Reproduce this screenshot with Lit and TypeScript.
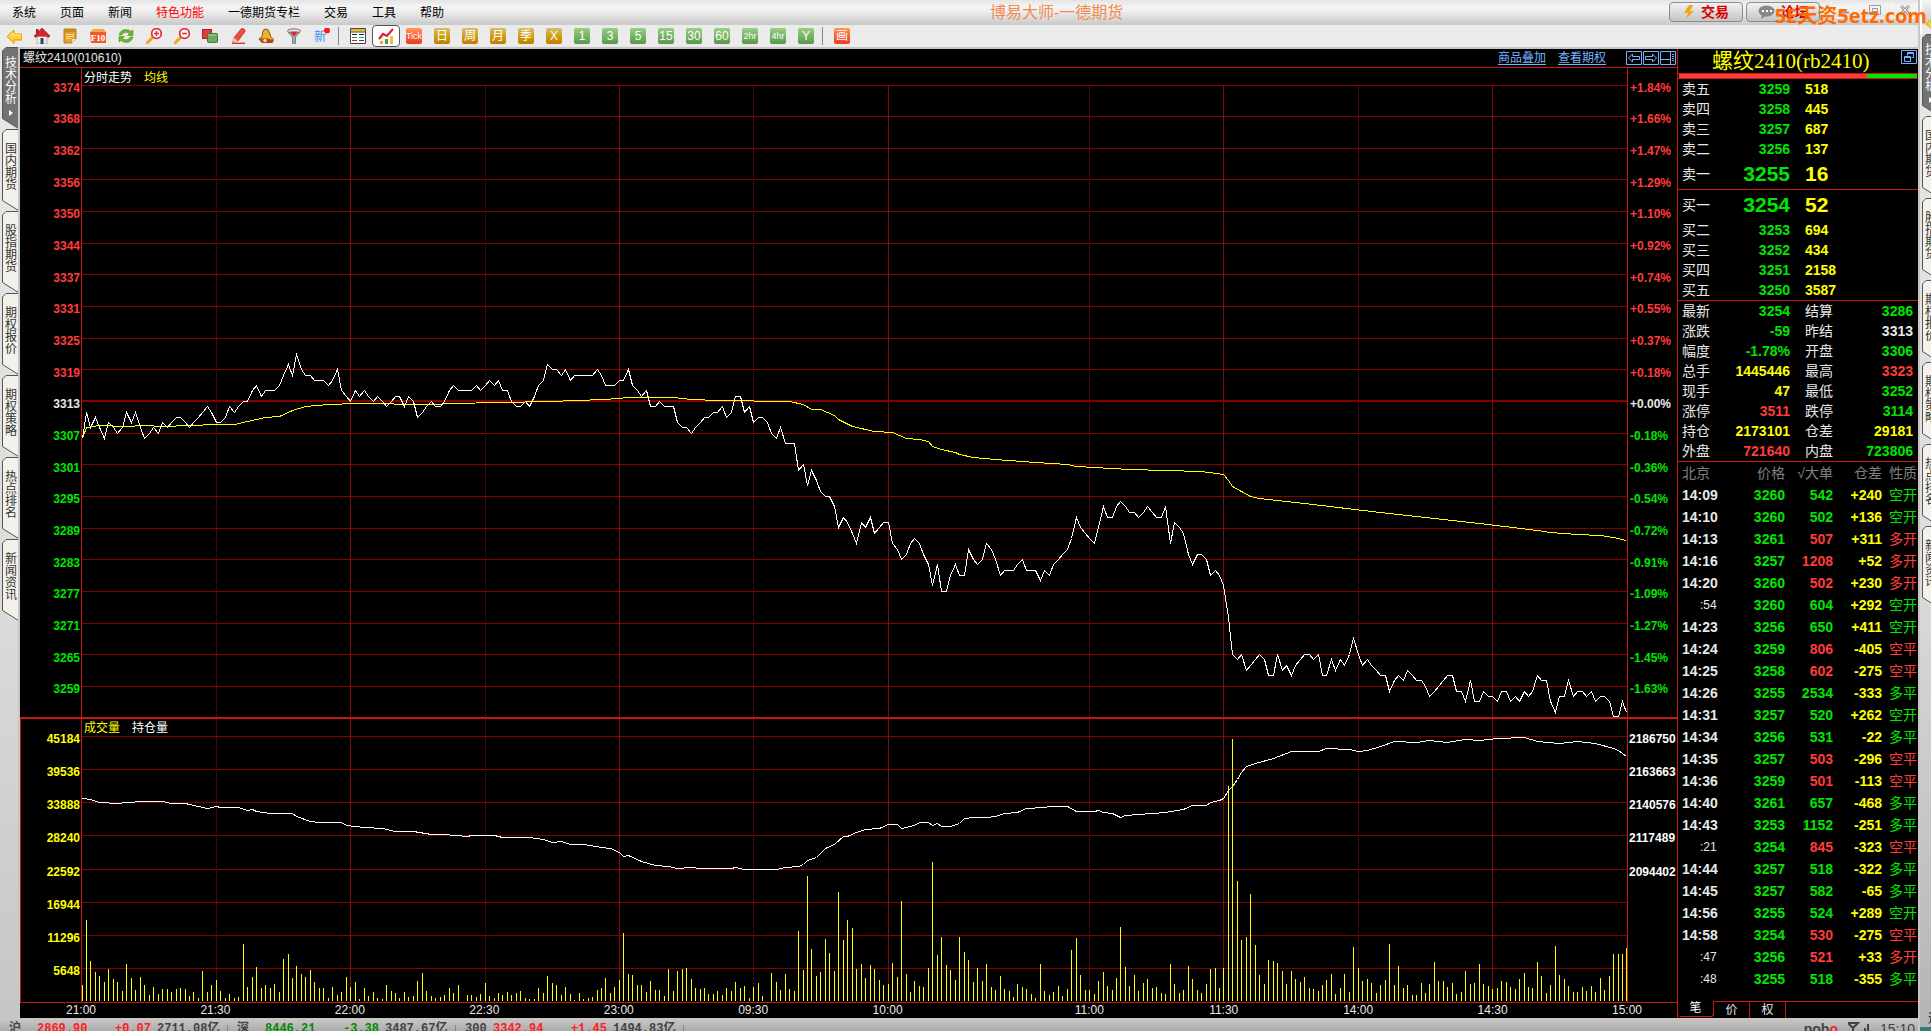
import { LitElement, html, svg, css } from "lit";
import { customElement } from "lit/decorators.js";
import { classMap } from "lit/directives/class-map.js";

const base = css`
  *, *::before, *::after { box-sizing: border-box; }
  button { font: inherit; color: inherit; background: none; border: 0; padding: 0; margin: 0; cursor: pointer; white-space: nowrap; }
  svg { display: block; }
  table { border-collapse: separate; border-spacing: 0; }
  td, th { padding: 0; font-weight: inherit; }
  .red { color: #ff3c3c; }
  .green { color: #00e600; }
  .yellow { color: #ffff00; }
  .white { color: #e8e8e8; }
`;

/* ---------- market data ---------- */

const SESSION = 345;
const MARKS: [number, string, boolean][] = [
  [0, "21:00", false], [30, "21:30", true], [60, "22:00", false], [90, "22:30", true], [120, "23:00", false],
  [150, "09:30", true], [180, "10:00", false], [225, "11:00", true], [255, "11:30", false],
  [285, "14:00", true], [315, "14:30", false], [345, "15:00", false],
];

const LAST = [
  3306,3311,3308,3310,3308,3306,3309,3308,3307,3308,3311,3309,3311,3308,3306,3307,3308,3307,3309,3308,
  3309,3310,3310,3309,3308,3309,3310,3311,3312,3311,3309,3309,3310,3312,3311,3312,3313,3313,3315,3316,
  3314,3315,3315,3315,3316,3318,3320,3318,3322,3319,3318,3318,3317,3317,3317,3316,3317,3319,3315,3314,
  3313,3315,3314,3315,3314,3313,3314,3313,3312,3313,3314,3314,3312,3314,3313,3310,3311,3312,3313,3312,
  3312,3313,3315,3316,3315,3315,3315,3315,3316,3315,3316,3317,3316,3317,3315,3315,3313,3312,3312,3313,
  3312,3314,3316,3317,3320,3319,3319,3318,3319,3317,3318,3318,3318,3318,3318,3319,3318,3316,3316,3316,
  3317,3317,3319,3316,3315,3314,3315,3312,3312,3313,3312,3312,3312,3309,3308,3308,3307,3308,3309,3310,
  3310,3311,3311,3312,3310,3311,3314,3314,3311,3312,3309,3310,3310,3309,3307,3306,3308,3305,3305,3305,
  3300,3301,3297,3300,3298,3296,3295,3295,3293,3289,3291,3290,3288,3286,3290,3289,3291,3288,3289,3290,
  3290,3286,3285,3283,3284,3286,3287,3286,3284,3282,3278,3282,3277,3277,3280,3282,3280,3280,3285,3283,
  3282,3283,3286,3285,3283,3280,3281,3281,3281,3282,3283,3281,3281,3281,3279,3281,3280,3282,3283,3284,
  3285,3287,3291,3289,3288,3287,3286,3289,3293,3291,3291,3293,3294,3293,3292,3292,3291,3292,3293,3292,
  3291,3291,3293,3286,3290,3289,3288,3284,3282,3284,3284,3283,3280,3281,3280,3278,3272,3265,3264,3265,
  3262,3263,3264,3265,3264,3261,3261,3265,3262,3263,3261,3263,3264,3265,3265,3264,3265,3261,3261,3264,
  3262,3264,3263,3265,3268,3265,3263,3264,3263,3262,3261,3261,3258,3260,3261,3260,3262,3261,3260,3260,
  3259,3257,3258,3259,3260,3261,3261,3258,3258,3256,3260,3256,3256,3258,3257,3257,3256,3258,3258,3256,
  3257,3256,3258,3257,3258,3261,3260,3260,3256,3254,3257,3257,3260,3257,3258,3258,3257,3258,3256,3257,
  3257,3256,3253,3253,3256,3254,
];

/* [minute, vertical position] */
const AVERAGE: [number, number][] = [
  [0,370],[1,359],[4,357],[10,358],[14,357],[18,358],[24,357],[30,356],[34,356],[37,353],[41,349],[44,348],[47,342],
  [50,338],[55,336],[61,335],[78,336],[83,335],[93,334],[105,333],[110,332],[117,331],[122,329],[132,329],[136,331],
  [142,332],[158,333],[161,336],[163,341],[165,341],[168,347],[169,351],[172,358],[177,363],[181,364],[184,370],
  [187,371],[189,373],[190,378],[192,381],[195,384],[196,386],[199,389],[204,391],[213,394],[220,396],[222,398],
  [226,399],[234,401],[242,402],[250,403],[255,406],[256,412],[257,418],[259,423],[261,428],[263,430],[273,435],
  [290,444],[312,455],[325,462],[328,464],[334,466],[339,467],[342,469],[345,472],
];

const OPEN_INTEREST: [number, number][] = [
  [0,79],[2,80],[4,83],[8,84],[10,83],[14,82],[18,82],[20,84],[23,84],[24,85],[26,87],[28,89],[30,87],[31,88],[35,88],
  [37,91],[38,90],[39,92],[42,94],[47,94],[48,97],[51,102],[53,103],[58,103],[59,106],[63,108],[67,109],[70,112],[74,112],
  [78,115],[81,115],[86,117],[87,116],[92,116],[94,118],[100,118],[103,120],[105,123],[107,122],[109,125],[112,125],
  [116,128],[118,129],[120,133],[121,137],[122,136],[125,142],[128,146],[131,147],[133,149],[136,148],[138,149],[145,149],
  [146,148],[148,150],[155,150],[157,148],[160,147],[161,145],[162,141],[164,138],[165,134],[166,129],[168,125],[170,117],
  [171,117],[173,113],[175,110],[178,109],[180,105],[182,105],[183,109],[186,106],[187,103],[189,103],[190,106],[191,104],
  [192,107],[194,107],[196,104],[197,99],[199,98],[202,98],[204,97],[206,94],[209,93],[211,89],[215,88],[216,87],[220,87],
  [222,92],[226,92],[227,91],[228,93],[230,94],[232,98],[233,96],[236,95],[239,94],[242,93],[246,90],[248,86],[251,86],
  [252,83],[254,81],[255,79],[256,71],[257,67],[258,60],[259,53],[260,47],[262,44],[266,39],[270,32],[276,32],[278,29],
  [283,30],[285,32],[287,31],[290,27],[293,22],[298,23],[301,21],[305,23],[309,20],[312,21],[316,19],[322,18],[325,22],
  [330,24],[334,22],[338,24],[342,29],[343,31],[345,37],
];

const VOLUME = [
  16,81,40,29,25,19,32,22,19,10,37,23,11,24,16,6,14,7,12,12,9,12,13,12,5,9,3,30,9,16,
  21,10,3,7,3,4,57,14,24,34,13,16,13,17,9,42,47,23,35,27,24,31,19,13,13,3,14,6,9,24,
  14,19,2,13,5,9,3,2,16,10,8,3,9,4,5,20,28,10,5,3,4,6,13,8,16,0,6,6,4,7,
  18,5,3,8,6,9,6,8,10,3,2,2,13,8,25,18,16,6,14,7,1,8,2,3,4,11,13,23,8,14,
  21,68,27,26,16,16,9,20,11,11,5,32,10,30,32,33,22,13,12,13,7,7,10,6,13,10,19,13,15,3,
  14,18,5,0,28,19,11,27,12,10,70,31,125,52,25,29,62,48,30,109,61,81,73,32,37,23,36,32,21,16,
  17,38,24,100,27,9,20,15,14,33,139,46,64,36,31,21,64,49,41,19,33,20,37,14,11,25,12,10,4,17,
  14,12,7,3,37,10,6,9,15,5,12,51,63,26,11,11,7,20,29,15,11,23,74,34,15,26,10,18,22,13,
  14,8,7,37,17,8,11,35,22,11,8,17,32,33,13,33,215,262,120,61,64,107,56,26,17,41,40,38,30,17,
  30,22,19,24,13,12,10,16,21,27,7,13,27,9,54,33,20,22,18,8,16,21,57,16,35,13,16,6,6,18,
  8,17,39,20,20,14,18,7,9,30,17,18,37,17,15,12,13,20,19,14,12,22,28,14,13,39,25,8,16,55,
  26,22,15,9,9,14,10,15,9,23,11,25,47,47,47,53,
];

const PRICE_GRID = [17,48,80,111,143,175,206,238,270,301,333,365,396,428,460,491,523,555,586,618];
const VOLUME_GRID = [17,50,83,116,150,183,216,249];
const PRICE_LABELS = [3374,3368,3362,3356,3350,3344,3337,3331,3325,3319,3313,3307,3301,3295,3289,3283,3277,3271,3265,3259];
const CHANGE_LABELS = ["+1.84%","+1.66%","+1.47%","+1.29%","+1.10%","+0.92%","+0.74%","+0.55%","+0.37%","+0.18%","+0.00%",
  "-0.18%","-0.36%","-0.54%","-0.72%","-0.91%","-1.09%","-1.27%","-1.45%","-1.63%"];
const VOLUME_LABELS = [45184,39536,33888,28240,22592,16944,11296,5648];
const OI_LABELS = ["2186750","2163663","2140576","2117489","2094402","","",""];

const PLOT_W = 1545;
const PRICE_H = 649;
const VOL_H = 283;
const mx = (m: number) => Math.min(PLOT_W - 1, Math.floor((m * PLOT_W) / SESSION));
const priceY = (p: number) => Math.min(PRICE_H - 1, Math.round(333 + (3313 - p) * 5.27));
const line = (pts: [number, number][]) => pts.map(([m, y]) => `${mx(m) + 0.5},${y + 0.5}`).join(" ");

/* ---------- side tabs ---------- */

@customElement("side-tabs")
class SideTabs extends LitElement {
  static styles = [base, css`
    :host { display: block; }
    .tabs { display: flex; flex-direction: column; padding-left: 2px; }
    .tab { display: grid; width: 17px; height: 82px; color: #333; }
    .tab > * { grid-area: 1 / 1; }
    .word { display: flex; flex-direction: column; align-items: center; padding: 10px 0 0 1px; width: 17px;
      font-size: 12px; line-height: 12px; }
    .word.plain { padding-top: 14px; }
    .arrow { width: 0; height: 0; margin-top: 5px; border-left: 4px solid #fff; border-top: 3px solid transparent; border-bottom: 3px solid transparent; }
    .tab.on { color: #fff; }
  `];
  names = ["技术分析", "国内期货", "股指期货", "期权报价", "期权策略", "热点排名", "新闻资讯"];
  render() {
    return html`<nav class="tabs">${this.names.map((n, i) => html`
      <button class=${classMap({ tab: true, on: i === 0 })}>
        <svg width="17" height="82" viewBox="0 0 17 82">
          <path d="M16.5 .5H4L.5 4V71.5L16.5 81.5" fill=${i === 0 ? "#737373" : "#f2f1ea"} stroke="#555"/>
        </svg>
        <span class=${classMap({ word: true, plain: i > 0 })}>
          ${[...n].map((c) => html`<span>${c}</span>`)}
          ${i === 0 ? html`<i class="arrow"></i>` : null}
        </span>
      </button>`)}</nav>`;
  }
}

/* ---------- intraday chart ---------- */

@customElement("time-chart")
class TimeChart extends LitElement {
  static styles = [base, css`
    :host { display: flex; flex-direction: column; flex: 1; min-width: 0; min-height: 0; background: #000; color: #e8e8e8; font-size: 12px; line-height: 16px; }
    .head { display: flex; align-items: center; height: 19px; padding-left: 3px; border-bottom: 1px solid #c81810; }
    .head h2 { flex: 1; margin: 0; font-size: 12px; font-weight: 400; }
    .head a { color: #74b4ff; margin-right: 12px; text-decoration: underline; text-underline-offset: 2px; }
    .tools { display: flex; gap: 1px; margin-left: 8px; padding-right: 1px; }
    .pane { display: flex; min-height: 0; }
    .price { flex: 649; }
    .volume { flex: 284; border-top: 2px solid #c81810; }
    .left, .right { display: flex; flex-direction: column; font-weight: 700; }
    .left { width: 61px; padding-right: 1px; text-align: right; }
    .right { width: 49px; padding-left: 2px; white-space: nowrap; }
    .price .left, .price .right { padding-top: 4px; padding-bottom: 12px; }
    .volume .left { border-left: 1px solid #c81810; }
    .volume .left, .volume .right { padding-top: 3px; padding-bottom: 14px; border-bottom: 1px solid #c81810; }
    .volume .right { padding-left: 1px; color: #fff; }
    .volume .plot { border-bottom: 1px solid #c81810; }
    .scale { flex: 1; min-height: 0; display: flex; flex-direction: column; justify-content: center; }
    .plot { position: relative; flex: 1; min-width: 0; display: flex; border-left: 1px solid #c81810; border-right: 1px solid #c81810; }
    .plot svg { flex: 1; min-width: 0; width: 100%; height: 100%; }
    .legend { position: absolute; left: 2px; top: 2px; display: flex; gap: 12px; color: #fff; }
    .volume .legend { top: 1px; }
    .axis { display: flex; height: 15px; line-height: 15px; padding: 0 50px 0 61px; }
    .slot { min-width: 0; }
    .slot span { display: flex; justify-content: center; width: 0; }
  `];

  verticals(top: number, bottom: number) {
    return MARKS.slice(1, -1).map(([m, , dotted]) => svg`
      <line x1=${mx(m) + 0.5} x2=${mx(m) + 0.5} y1=${top} y2=${bottom} stroke="#860808"
        stroke-dasharray=${dotted ? "1 1" : "none"}/>`);
  }

  render() {
    return html`
      <header class="head">
        <h2>螺纹2410(010610)</h2>
        <a href="#overlay">商品叠加</a><a href="#options">查看期权</a>
        <div class="tools">
          <button aria-label="左"><svg width="16" height="14" fill="none" stroke="#74b4ff"><path d="M.5 .5h15v13H.5zM2.5 7l4-4v2.500h7v3h-7V11z"/></svg></button>
          <button aria-label="右"><svg width="16" height="14" fill="none" stroke="#74b4ff"><path d="M.5 .5h15v13H.5zM13.500 7l-4-4v2.500h-7v3h7V11z"/></svg></button>
          <button aria-label="布局"><svg width="16" height="14" fill="none" stroke="#74b4ff"><path d="M.5 .5h15v13H.5zM10.500 1v12M1 8.500h9M12 3.500h2M12 5.500h2M12 7.500h2M12 9.500h2"/></svg></button>
        </div>
      </header>
      <section class="pane price">
        <div class="left">${PRICE_LABELS.map((p, i) => html`<div class="scale ${i < 10 ? "red" : i > 10 ? "green" : "white"}">${p}</div>`)}</div>
        <div class="plot">
          <svg viewBox="0 0 ${PLOT_W} ${PRICE_H}" preserveAspectRatio="none" shape-rendering="crispEdges" fill="none">
            ${PRICE_GRID.map((y, i) => svg`<line x1="0" x2=${PLOT_W} y1=${i === 10 ? y : y + 0.5} y2=${i === 10 ? y : y + 0.5} stroke="#860000" stroke-width=${i === 10 ? 2 : 1}/>`)}
            ${this.verticals(17, PRICE_H)}
            <polyline points=${line(AVERAGE)} stroke="#ffff00"/>
            <polyline points=${line(LAST.map((p, i) => [i, priceY(p)]))} stroke="#fff"/>
          </svg>
          <div class="legend"><span>分时走势</span><span class="yellow">均线</span></div>
        </div>
        <div class="right">${CHANGE_LABELS.map((p, i) => html`<div class="scale ${i < 10 ? "red" : i > 10 ? "green" : "white"}">${p}</div>`)}</div>
      </section>
      <section class="pane volume">
        <div class="left yellow">${VOLUME_LABELS.map((v) => html`<div class="scale">${v}</div>`)}</div>
        <div class="plot">
          <svg viewBox="0 0 ${PLOT_W} ${VOL_H}" preserveAspectRatio="none" shape-rendering="crispEdges" fill="none">
            ${VOLUME_GRID.map((y) => svg`<line x1="0" x2=${PLOT_W} y1=${y + 0.5} y2=${y + 0.5} stroke="#860000"/>`)}
            ${this.verticals(0, VOL_H)}
            <path d=${VOLUME.map((v, i) => v ? `M${mx(i) + 0.5} 282V${282 - v}` : "").join("")} stroke="#ffff00"/>
            <polyline points=${line(OPEN_INTEREST)} stroke="#fff"/>
          </svg>
          <div class="legend"><span class="yellow">成交量</span><span>持仓量</span></div>
        </div>
        <div class="right">${OI_LABELS.map((v) => html`<div class="scale">${v}</div>`)}</div>
      </section>
      <div class="axis">${MARKS.map(([m, t], i) => html`
        <div class="slot" style="flex:${i < MARKS.length - 1 ? MARKS[i + 1][0] - m : 0} 0 0px"><span>${t}</span></div>`)}</div>`;
  }
}

/* ---------- quote panel ---------- */

type Row = [string, string, string];
const ASKS: Row[] = [["卖五", "3259", "518"], ["卖四", "3258", "445"], ["卖三", "3257", "687"], ["卖二", "3256", "137"], ["卖一", "3255", "16"]];
const BIDS: Row[] = [["买一", "3254", "52"], ["买二", "3253", "694"], ["买三", "3252", "434"], ["买四", "3251", "2158"], ["买五", "3250", "3587"]];
const STATS = [
  ["最新", "3254", "green", "结算", "3286", "green"],
  ["涨跌", "-59", "green", "昨结", "3313", "white"],
  ["幅度", "-1.78%", "green", "开盘", "3306", "green"],
  ["总手", "1445446", "yellow", "最高", "3323", "red"],
  ["现手", "47", "yellow", "最低", "3252", "green"],
  ["涨停", "3511", "red", "跌停", "3114", "green"],
  ["持仓", "2173101", "yellow", "仓差", "29181", "yellow"],
  ["外盘", "721640", "red", "内盘", "723806", "green"],
];
const TICKS: [string, string, string, string, string, string][] = [
  ["14:09", "3260", "542", "g", "+240", "空开"], ["14:10", "3260", "502", "g", "+136", "空开"],
  ["14:13", "3261", "507", "r", "+311", "多开"], ["14:16", "3257", "1208", "r", "+52", "多开"],
  ["14:20", "3260", "502", "r", "+230", "多开"], [":54", "3260", "604", "g", "+292", "空开"],
  ["14:23", "3256", "650", "g", "+411", "空开"], ["14:24", "3259", "806", "r", "-405", "空平"],
  ["14:25", "3258", "602", "r", "-275", "空平"], ["14:26", "3255", "2534", "g", "-333", "多平"],
  ["14:31", "3257", "520", "g", "+262", "空开"], ["14:34", "3256", "531", "g", "-22", "多平"],
  ["14:35", "3257", "503", "r", "-296", "空平"], ["14:36", "3259", "501", "r", "-113", "空平"],
  ["14:40", "3261", "657", "g", "-468", "多平"], ["14:43", "3253", "1152", "g", "-251", "多平"],
  [":21", "3254", "845", "r", "-323", "空平"], ["14:44", "3257", "518", "g", "-322", "多平"],
  ["14:45", "3257", "582", "g", "-65", "多平"], ["14:56", "3255", "524", "g", "+289", "空开"],
  ["14:58", "3254", "530", "r", "-275", "空平"], [":47", "3256", "521", "r", "+33", "多开"],
  [":48", "3255", "518", "g", "-355", "多平"],
];

@customElement("quote-panel")
class QuotePanel extends LitElement {
  static styles = [base, css`
    :host { display: flex; flex-direction: column; flex: 0 0 241px; background: #000; border-left: 1px solid #c81810; color: #e8e8e8; font-size: 14px; line-height: 16px; }
    .title { display: flex; height: 24px; align-items: flex-start; padding: 1px 1px 0 34px; }
    .title h1 { flex: 1; margin: 0; font: 400 21px/23px "Liberation Serif", "Noto Sans CJK SC", serif; color: #ffff00; white-space: nowrap; }
    .ratio { display: flex; flex: none; height: 6px; padding: 0 1px; border: solid #c81810; border-width: 1px 0; }
    .ratio i { flex: 188; background: #ff3c3c; }
    .ratio i + i { flex: 50; background: #00e600; }
    table { width: 100%; table-layout: fixed; }
    td { font-weight: 700; text-align: right; }
    th { text-align: left; color: #e8e8e8; }
    .book { border-bottom: 1px solid #c81810; }
    .book tr, .stats tr { height: 20px; }
    .book .best { height: 30px; }
    .best td { font-size: 21px; line-height: 24px; }
    .book .amount { padding-left: 15px; text-align: left; }
    .stats { border-bottom: 1px solid #c81810; }
    .stats th + td + th { padding-left: 15px; }
    .stats td:last-child { padding-right: 5px; }
    .ticks tr { height: 22px; }
    .ticks th { text-align: right; color: #808080; }
    tr > :first-child, .ticks tr > :first-child { padding-left: 4px; text-align: left; }
    .ticks tr > .sub { padding-left: 22px; font-size: 12px; font-weight: 400; }
    .ticks .kind { font-weight: 400; padding-right: 1px; }
    .fill { flex: 1; min-height: 0; }
    .foot { display: flex; height: 17px; }
    .foot button { width: 36px; height: 16px; line-height: 15px; border-right: 1px solid #c81810; font-size: 12px; }
    .foot .on { border: 1px solid #c81810; border-top: 0; border-left: 0; border-radius: 0 0 3px 3px; color: #fff; }
    .rest { display: flex; flex: 1; border-top: 1px solid #c81810; height: 16px; }
  `];
  book(rows: Row[], best: number) {
    return html`<table class="book"><colgroup><col style="width:50px"><col style="width:62px"><col></colgroup>
      <tbody>${rows.map(([n, p, v], i) => html`<tr class=${i === best ? "best" : ""}><th scope="row">${n}</th><td class="green">${p}</td><td class="yellow amount">${v}</td></tr>`)}</tbody></table>`;
  }
  render() {
    return html`
      <header class="title"><h1>螺纹2410(rb2410)</h1>
        <button aria-label="还原"><svg width="16" height="14" fill="none" stroke="#74b4ff"><path d="M.5 .5h15v13H.5zM6.500 5.500v-3h6v5h-2M6.500 3.500h6M3.500 6.500h6v5h-6zM3.500 7.500h6"/></svg></button>
      </header>
      <div class="ratio"><i></i><i></i></div>
      ${this.book(ASKS, 4)} ${this.book(BIDS, 0)}
      <table class="stats"><colgroup><col style="width:50px"><col style="width:62px"><col style="width:60px"><col></colgroup>
        <tbody>${STATS.map((s) => html`<tr><th scope="row">${s[0]}</th><td class=${s[2]}>${s[1]}</td><th scope="row">${s[3]}</th><td class=${s[5]}>${s[4]}</td></tr>`)}</tbody></table>
      <table class="ticks"><colgroup><col style="width:50px"><col style="width:57px"><col style="width:48px"><col style="width:49px"><col></colgroup>
        <thead><tr><th>北京</th><th>价格</th><th>√大单</th><th>仓差</th><th class="kind">性质</th></tr></thead>
        <tbody>${TICKS.map(([t, p, v, c, d, k]) => {
          const tone = c === "g" ? "green" : "red";
          return html`<tr><td class=${t[0] === ":" ? "sub" : ""}>${t}</td><td class="green">${p}</td><td class=${tone}>${v}</td><td class="yellow">${d}</td><td class="kind ${tone}">${k}</td></tr>`;
        })}</tbody></table>
      <div class="fill"></div>
      <footer class="foot"><button class="on">笔</button><div class="rest"><button>价</button><button>权</button></div></footer>`;
  }
}

/* ---------- toolbar icons ---------- */

const ICONS: Record<string, unknown> = {
  back: svg`<path d="M1 8.500 8 2v4h8v6H8v3.500z" fill="#ffd02e" stroke="#d99a10"/><path d="M4 8l3-3v2h8" stroke="#fff2a8" fill="none"/>`,
  home: svg`<path d="M3 8h10v8H3z" fill="#e9eef2" stroke="#8a8f96" stroke-width=".6"/><path d="M0 8 8 0l8 8-2 1.500-6-6-6 6z" fill="#d8202c" stroke="#8d0f18" stroke-width=".6"/><path d="M2 1h2.500v4H2z" fill="#b01822"/><path d="M3 8.500 8 3.500l5 5z" fill="#d8202c"/><path d="M6.500 10h3v6h-3z" fill="#3d4450"/>`,
  note: svg`<path d="M2 1h12v10l-4 4H2z" fill="#e2a134" stroke="#b97c18"/><path d="M2 1h12v3H2z" fill="#c98a20"/><path d="M4 6.500h8M4 8.500h8M4 10.500h5" stroke="#fbe0a0"/><path d="M10 15v-4h4z" fill="#fbe4ad"/>`,
  f10: svg`<path d="M0 4l3-2h10l3 2v11H1z" fill="#f2592c"/><path d="M1 4h14l-1-3H3z" fill="#f5a54a"/><text x="8" y="13" text-anchor="middle" font-size="9" font-weight="700" fill="#fff" font-family="Liberation Serif, serif">F10</text>`,
  sync: svg`<path d="M1 7q1.500-5.500 7-5.500 3 0 5 2L15 2v5.500H9.500l2-2Q10 4.300 8 4.300 4.500 4.300 4 7z" fill="#6bb52f" stroke="#3f8a17" stroke-width=".5"/><path d="M15 9q-1.500 5.500-7 5.500-3 0-5-2L1 14V8.500h5.500l-2 2Q6 11.700 8 11.700 11.500 11.700 12 9z" fill="#6bb52f" stroke="#3f8a17" stroke-width=".5"/>`,
  plus: svg`<path d="M1 15l5-5" stroke="#efa61c" stroke-width="3" stroke-linecap="round"/><circle cx="10.500" cy="5.500" r="4.800" fill="#fff" stroke="#e2303a" stroke-width="1.800"/><path d="M8 5.500h5M10.500 3v5" stroke="#e2303a" stroke-width="1.600"/>`,
  minus: svg`<path d="M1 15l5-5" stroke="#efa61c" stroke-width="3" stroke-linecap="round"/><circle cx="10.500" cy="5.500" r="4.800" fill="#fff" stroke="#e2303a" stroke-width="1.800"/><path d="M8 5.500h5" stroke="#e2303a" stroke-width="1.600"/>`,
  layers: svg`<rect x=".5" y="1.500" width="9" height="9" fill="#e23a3f" stroke="#b01f26"/><rect x="5.500" y="5.500" width="10" height="9" rx="1" fill="#6faa62" stroke="#3d7a35"/><path d="M6.500 7h8" stroke="#a9d39e"/>`,
  pen: svg`<path d="M4 9.500 11.500 .5q4 0 3.500 3L8 13z" fill="#ef4a3a" stroke="#b52a20" stroke-width=".7"/><path d="M4 9.500l4 3.500-6 1.500z" fill="#f3cfa0" stroke="#a87b42" stroke-width=".5"/><path d="M2 15.300h13" stroke="#e23a2f" stroke-width="1.400"/>`,
  bell: svg`<path d="M1 11Q5 9 4.500 4.500 5 1 8 1q3 .5 3.500 4 .5 4 4 6.500l-1 3H4z" fill="#f0b030" stroke="#8d4a14"/><path d="M1.500 11q6-2 13.500 1l-1 2.500H4z" fill="#a8491a"/><circle cx="7" cy="12.500" r="1.800" fill="#f8df8a"/>`,
  filter: svg`<path d="M2 4l4.500 5v6.500h3V9L14 4z" fill="#a6a6ac" stroke="#666" stroke-width=".7"/><ellipse cx="8" cy="3" rx="6.500" ry="2.200" fill="#dde" stroke="#777"/><path d="M4 3.500h8L8 8.500z" fill="#dd2a2f"/>`,
  news: svg`<text x="6" y="13" text-anchor="middle" font-size="12" fill="#3a90f0" font-family="Noto Sans CJK SC, sans-serif">新</text><circle cx="13" cy="2.500" r="3" fill="#ff1a1a"/>`,
  table: svg`<path d="M.5 .5h15v15H.5z" fill="#fff" stroke="#444"/><path d="M1 1h14v2.500H1z" fill="#f0b428"/><path d="M1 4h14" stroke="#444"/><path d="M2 6.500h5" stroke="#222"/><path d="M9 6.500h5" stroke="#222"/><path d="M2 9.500h5M9 9.500h5" stroke="#16a05a"/><path d="M2 12.500h5" stroke="#d42020"/><path d="M9 12.500h5" stroke="#2440b8"/>`,
  chart: svg`<path d="M2 16v-3h3v3z" fill="#f6a23a"/><path d="M7 16v-5h3v5z" fill="#3fa63a"/><path d="M12 16V8h3v8z" fill="#e9c04a"/><path d="M1 11l4-5 4 2 6-7" fill="none" stroke="#e6202a" stroke-width="2.200"/>`,
};

type Tool = [string, string, string];
const TOOLS_A: Tool[] = [["icon", "back", "后退"], ["icon", "home", "主页"], ["icon", "note", "笔记"], ["icon", "f10", "资料"], ["icon", "sync", "刷新"],
  ["icon", "plus", "放大"], ["icon", "minus", "缩小"], ["icon", "layers", "叠加"], ["icon", "pen", "画线"], ["icon", "bell", "预警"], ["icon", "filter", "筛选"], ["icon", "news", "新功能"]];
const TOOLS_B: Tool[] = [["icon", "table", "报价"], ["icon on", "chart", "分时图"], ["hot small", "Tick", ""], ["gold", "日", ""], ["gold", "周", ""], ["gold", "月", ""],
  ["gold", "季", ""], ["gold", "X", ""], ["leaf", "1", ""], ["leaf", "3", ""], ["leaf", "5", ""], ["leaf", "15", ""], ["leaf", "30", ""], ["leaf", "60", ""],
  ["leaf small", "2hr", ""], ["leaf small", "4hr", ""], ["leaf", "Y", ""]];

/* ---------- page ---------- */

@customElement("app-root")
class AppRoot extends LitElement {
  static styles = [base, css`
    :host { display: flex; height: 100vh; overflow: hidden; background: #d4d0d0; color: #000;
      font-family: "Liberation Sans", "Noto Sans CJK SC", sans-serif; font-size: 12px; line-height: 16px; }
    .window { display: flex; flex-direction: column; flex: 1; min-width: 0; }
    .bar { display: flex; flex: none; height: 25px; align-items: center; padding-left: 12px; background: linear-gradient(#e4e4e4, #f4f4f4 25%, #eee 45%, #c9c9c9); }
    .menu { display: flex; gap: 24px; }
    .menu .hot { color: #f00; }
    .name { flex: 1; text-align: center; font-size: 16px; line-height: 20px; color: #f58a4e; }
    .actions { position: relative; display: flex; flex: none; gap: 3px; align-self: flex-start; padding-top: 2px; }
    .action { display: flex; align-items: center; justify-content: center; gap: 6px; width: 74px; height: 20px; border: 1px solid #8c8c8c; border-radius: 4px;
      background: linear-gradient(#f2f2f2, #c4c4c4); color: #d80000; font-weight: 700; font-size: 14px; }
    .controls { display: flex; gap: 3px; padding-left: 8px; }
    .controls button { display: flex; align-items: center; justify-content: center; width: 27px; height: 16px; border: 1px solid #f8f8f8; border-top: 0; }
    .mark { position: absolute; right: -9px; top: 4px; font: 700 20px/24px "Open Sans", "Noto Sans CJK SC", sans-serif; color: #ff6a00; white-space: nowrap; z-index: 2; }
    .toolbar { display: flex; flex: none; height: 22px; align-items: center; background: #ebebeb; }
    .tool { display: flex; align-items: center; justify-content: center; width: 28px; height: 22px; }
    .tool.on { border: 1px solid #555; border-radius: 4px; background: #fff; }
    .chip { display: flex; justify-content: center; width: 16px; height: 16px; border-radius: 2px; color: #fff; font-size: 12px; line-height: 16px; }
    .small .chip { font-size: 9px; }
    .gold .chip { background: linear-gradient(#d6bd70, #d0a010 50%, #c07c00); }
    .leaf .chip { background: linear-gradient(#98d080, #58984c); }
    .hot .chip { background: linear-gradient(#ff9c4c, #f8603c 50%, #ee3c20); }
    .sep { width: 1px; height: 18px; margin: 0 5px 0 2px; background: #888; }
    .main { display: flex; flex: 1; min-height: 0; }
    .rail { flex: 0 0 20px; overflow: hidden; background: linear-gradient(#e8e8e8, #dcdcdc 55%, #c6c6c6); border-right: 2px solid #cac6c6; }
    .desk { display: flex; flex: 1; min-width: 0; border-top: 2px solid #c8c4c4; }
    .status { display: flex; flex: none; height: 13px; overflow: hidden; justify-content: space-between; background: linear-gradient(#ccc8c8, #acacac);
      font: 700 12px/22px "Liberation Mono", "Noto Sans CJK SC", monospace; color: #444; }
    .indexes { display: flex; height: 22px; }
    .index { display: grid; grid-template-columns: 28px 78px 42px 1fr; width: 228px; padding-left: 9px; background: linear-gradient(#888, #888) right 7px / 1px 12px no-repeat; white-space: nowrap; }
    .index .up { color: #ff2020; }
    .index .down { color: #008a00; }
    .tray { display: flex; height: 22px; align-items: center; gap: 10px; padding-right: 3px; font: 700 14px/22px "Liberation Sans", sans-serif; }
    .tray .time { font-weight: 400; }
    .tray b { color: #f22; }
    .next { flex: 0 0 13px; overflow: hidden; display: flex; flex-direction: column; border-left: 2px solid #cac6c6; background: linear-gradient(#e8e8e8, #dcdcdc 55%, #b4b4b4); }
    .next .cap { flex: none; height: 34px; padding-top: 18px; background: linear-gradient(#f4f4f4, #ccc 70%, #ebebeb 74%); border-left: 2px solid #fff; }
    .next .link { margin-top: auto; padding-left: 8px; color: #222; white-space: nowrap; }
    .next .teal { height: 4px; background: #2f7f7c; }
    .next svg { margin-left: 4px; }
  `];

  tool([kind, label, title]: Tool) {
    return kind.startsWith("icon")
      ? html`<button class="tool ${kind}" aria-label=${title}><svg width="16" height="16" viewBox="0 0 16 16" fill="none">${ICONS[label]}</svg></button>`
      : html`<button class="tool ${kind}"><span class="chip">${label}</span></button>`;
  }

  render() {
    const menu = ["系统", "页面", "新闻", "特色功能", "一德期货专栏", "交易", "工具", "帮助"];
    const indexes = [["沪", "2869.90", "+0.07", "2711.08亿", "up"], ["深", "8446.21", "-3.38", "3487.67亿", "down"], ["300", "3342.94", "+1.45", "1494.83亿", "up"]];
    return html`
      <div class="window">
        <header class="bar">
          <nav class="menu">${menu.map((m) => html`<button class=${m === "特色功能" ? "hot" : ""}>${m}</button>`)}</nav>
          <div class="name">博易大师-一德期货</div>
          <div class="actions">
            <button class="action"><svg width="12" height="14" viewBox="0 0 12 14"><path d="M6 0 1 8h4l-2 6 8-8H7l3-6z" fill="#f5a21c"/></svg>交易</button>
            <button class="action"><svg width="17" height="14" viewBox="0 0 17 14"><ellipse cx="8.500" cy="6" rx="8" ry="5.500" fill="#888"/><path d="M4 10l-1 4 5-3z" fill="#888"/><path d="M4 6h2M8 6h2M12 6h2" stroke="#fff" stroke-width="2"/></svg>论坛</button>
            <div class="controls">
              <button aria-label="最小化"><svg width="10" height="8"><path d="M1 6.500h8" stroke="#999" stroke-width="2"/></svg></button>
              <button aria-label="还原"><svg width="12" height="10" fill="none" stroke="#999"><path d="M.5 .5h11v9H.5zM3.500 3.500h5v3h-5z"/></svg></button>
              <button aria-label="关闭"><svg width="12" height="10" fill="none"><path d="M2 1l8 8M10 1l-8 8" stroke="#999" stroke-width="3"/><path d="M2 1l8 8M10 1l-8 8" stroke="#eee"/></svg></button>
            </div>
            <div class="mark">5E天资5etz.com</div>
          </div>
        </header>
        <div class="toolbar">
          ${TOOLS_A.map((t) => this.tool(t))}<i class="sep"></i>${TOOLS_B.map((t) => this.tool(t))}<i class="sep"></i>${this.tool(["hot", "画", ""])}
        </div>
        <div class="main">
          <aside class="rail"><side-tabs></side-tabs></aside>
          <main class="desk"><time-chart></time-chart><quote-panel></quote-panel></main>
        </div>
        <footer class="status">
          <div class="indexes">${indexes.map(([n, p, c, a, d]) => html`<div class="index"><span>${n}</span><span class=${d}>${p}</span><span class=${d}>${c}</span><span>${a}</span></div>`)}</div>
          <div class="tray"><span>pob<b>o</b></span>
            <svg width="22" height="14" viewBox="0 0 22 14" fill="none" stroke="#444" stroke-width="2"><path d="M0 1h10L5 6zM5 5v9M14 10v4M17 6v8M20 2v12"/></svg>
            <span class="time">15:10</span></div>
        </footer>
      </div>
      <aside class="next">
        <div class="cap"><svg width="10" height="12"><path d="M0 6l7-6v12z" fill="#ffd02e" stroke="#d99a10"/></svg></div>
        <side-tabs></side-tabs>
        <div class="link">连</div><div class="teal"></div>
      </aside>`;
  }
}
